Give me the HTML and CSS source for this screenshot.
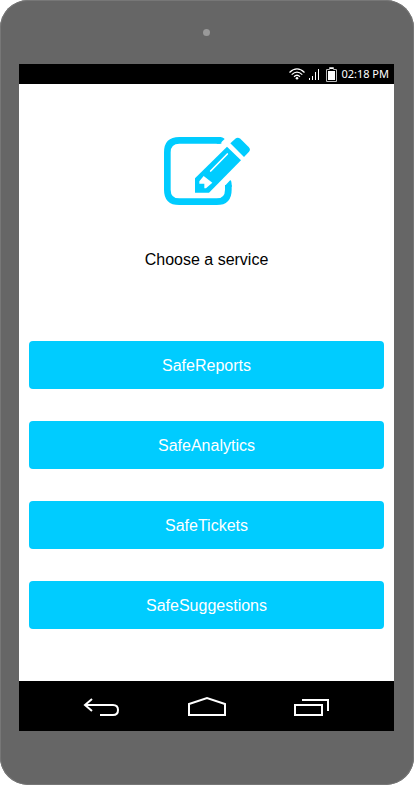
FILE: index.html
```html
<!DOCTYPE html>
<html lang="en">
<head>
<meta charset="utf-8">
<meta name="viewport" content="width=device-width, initial-scale=1">
<title>Choose a service</title>
<link rel="stylesheet" href="styles.css">
</head>
<body>
<div class="phone">
  <div class="speaker"><span class="camera"></span></div>
  <div class="screen">
    <header class="status">
      <svg class="wifi" width="16" height="12" viewBox="0 0 16 12" fill="none" stroke="#fff" stroke-width="1.2" aria-hidden="true">
        <path d="M.5 4.5Q8-2.6 15.5 4.5M2.7 6.6Q8 1.6 13.3 6.6M5 8.7Q8 5.8 11 8.7"/>
        <circle cx="8" cy="10.2" r="1.3" fill="#fff" stroke="none"/>
      </svg>
      <svg class="signal" width="11" height="12" viewBox="0 0 11 12" fill="#fff" aria-hidden="true">
        <path d="M0 10h1v2H0zM3 8h1v4H3zM6 4h1v8H6zM9 1h1v11H9z"/>
      </svg>
      <svg class="battery" width="11" height="15" viewBox="0 0 11 15" aria-hidden="true">
        <path d="M3.5 2.5v-2h4v2h3v12H.5v-12z" fill="none" stroke="#bbb"/>
        <path d="M2 4h7v9H2zM4 1h3v1H4z" fill="#fff"/>
      </svg>
      <time class="clock">02:18 PM</time>
    </header>
    <main class="content">
      <svg class="logo" width="117" height="90" viewBox="-6 0 351 270" aria-hidden="true">
        <path d="M214 46H88Q52 46 52 82V194Q52 230 88 230H200Q235 230 235 194V180" fill="none" stroke="#0cf" stroke-width="20"/>
        <path d="M205 36Q220 36 224 42L209 56H200zM225 184V182L241 165Q245 168 245 178V186z" fill="#0cf"/>
        <path d="M231 65L273 106L177 203H135V160z" fill="#0cf"/>
        <path d="M241 55L256 41Q263 35 271 41L296 66Q303 73 297 80L282 96z" fill="#0cf"/>
        <path d="M182 138L232 87" fill="none" stroke="#fff" stroke-width="5" stroke-linecap="round"/>
        <path d="M161 153L187 173L168 190H163V176H148V169z" fill="#fff"/>
      </svg>
      <h1 class="title">Choose a service</h1>
      <div class="services">
        <button class="service" type="button">SafeReports</button>
        <button class="service" type="button">SafeAnalytics</button>
        <button class="service" type="button">SafeTickets</button>
        <button class="service" type="button">SafeSuggestions</button>
      </div>
    </main>
    <nav class="nav">
      <button class="key" type="button" aria-label="Back">
        <svg width="40" height="24" viewBox="0 0 40 24" fill="none" stroke="#fff" stroke-width="2">
          <path d="M3 11H31Q36 11 36 16Q36 21 31 21H18M10 5L3 11L10 17"/>
        </svg>
      </button>
      <button class="key" type="button" aria-label="Home">
        <svg width="40" height="24" viewBox="0 0 40 24" fill="none" stroke="#fff" stroke-width="2">
          <path d="M2 21V10L20 4L38 10V21z"/>
        </svg>
      </button>
      <button class="key" type="button" aria-label="Recent apps">
        <svg width="40" height="24" viewBox="0 0 40 24" fill="none" stroke="#fff" stroke-width="2">
          <path d="M3 11H30V21H3zM10 6H36V17"/>
        </svg>
      </button>
    </nav>
  </div>
</div>
</body>
</html>
```
FILE: styles.css
```css
* {
  box-sizing: border-box;
}

body {
  margin: 0;
  background: #fff;
  font-family: "Liberation Sans", Arial, sans-serif;
  font-size: 16px;
}

.phone {
  display: flex;
  flex-direction: column;
  min-height: 100vh;
  padding: 0 20px 54px 19px;
  border-radius: 28px;
  background: #666;
  box-shadow: inset 0 0 0 1px #777;
}

.speaker {
  display: flex;
  align-items: center;
  justify-content: center;
  height: 64px;
}

.camera {
  width: 7px;
  height: 7px;
  border-radius: 50%;
  background: #999;
}

.screen {
  display: flex;
  flex: 1;
  flex-direction: column;
  background: #fff;
}

.status {
  display: flex;
  align-items: center;
  justify-content: flex-end;
  gap: 4px;
  height: 20px;
  padding: 0 5px;
  background: #000;
  color: #fff;
}

.battery {
  margin-left: 2px;
}

.clock {
  font: 11px/20px "Noto Sans", sans-serif;
}

.content {
  display: flex;
  flex: 1;
  flex-direction: column;
  align-items: center;
  padding: 41px 10px 52px;
}

.title {
  margin: 35px 0 71px;
  font-size: 16px;
  font-weight: 400;
  line-height: 20px;
}

.services {
  display: grid;
  gap: 32px;
  width: 100%;
}

.service {
  height: 48px;
  padding: 2px 0 0;
  border: 0;
  border-radius: 4px;
  background: #0cf;
  color: #fff;
  font: inherit;
}

.nav {
  display: flex;
  align-items: center;
  justify-content: center;
  gap: 65px;
  height: 50px;
  padding-left: 1px;
  background: #000;
}

.key {
  display: flex;
  padding: 0;
  border: 0;
  background: none;
}
```
